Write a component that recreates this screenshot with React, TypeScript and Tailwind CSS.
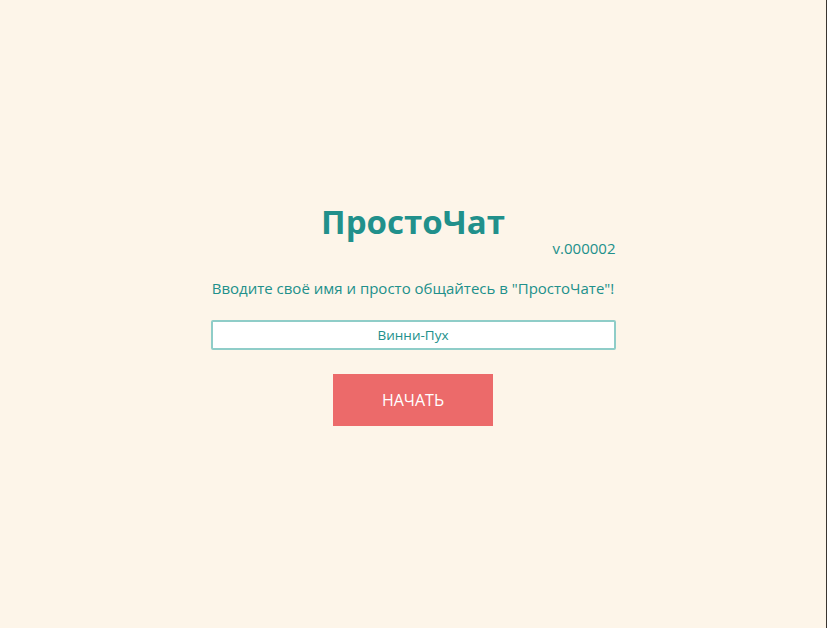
export default function App() {
  return (
    <div className="flex h-[628px] w-[827px] bg-[#fdf5e9]" style={{ fontFamily: '"Open Sans", "Noto Sans", sans-serif' }}>
      <div className="flex flex-1 flex-col items-center pt-[199px]">
        <div className="flex w-[405px] flex-col items-center">
          <h1 className="text-[33px] font-bold leading-[46px] text-[#21908b]">ПростоЧат</h1>
          <div className="-mt-[7px] w-full text-right text-[15px] leading-[20px] text-[#21908b]">v.000002</div>
          <p className="mt-[20px] text-[15px] leading-[20px] text-[#21908b] whitespace-nowrap">
            Вводите своё имя и просто общайтесь в "ПростоЧате"!
          </p>
          <input
            defaultValue="Винни-Пух"
            className="mt-[22px] h-[30px] w-[405px] rounded-[2px] border-2 border-[#8fcdc8] bg-white text-center text-[13.5px] text-[#21908b] outline-none"
          />
          <button className="mt-[24px] h-[52px] w-[160px] bg-[#ec6a6a] text-[16px] text-white">НАЧАТЬ</button>
        </div>
      </div>
      <div className="w-px bg-[#3a3530]" />
    </div>
  );
}
